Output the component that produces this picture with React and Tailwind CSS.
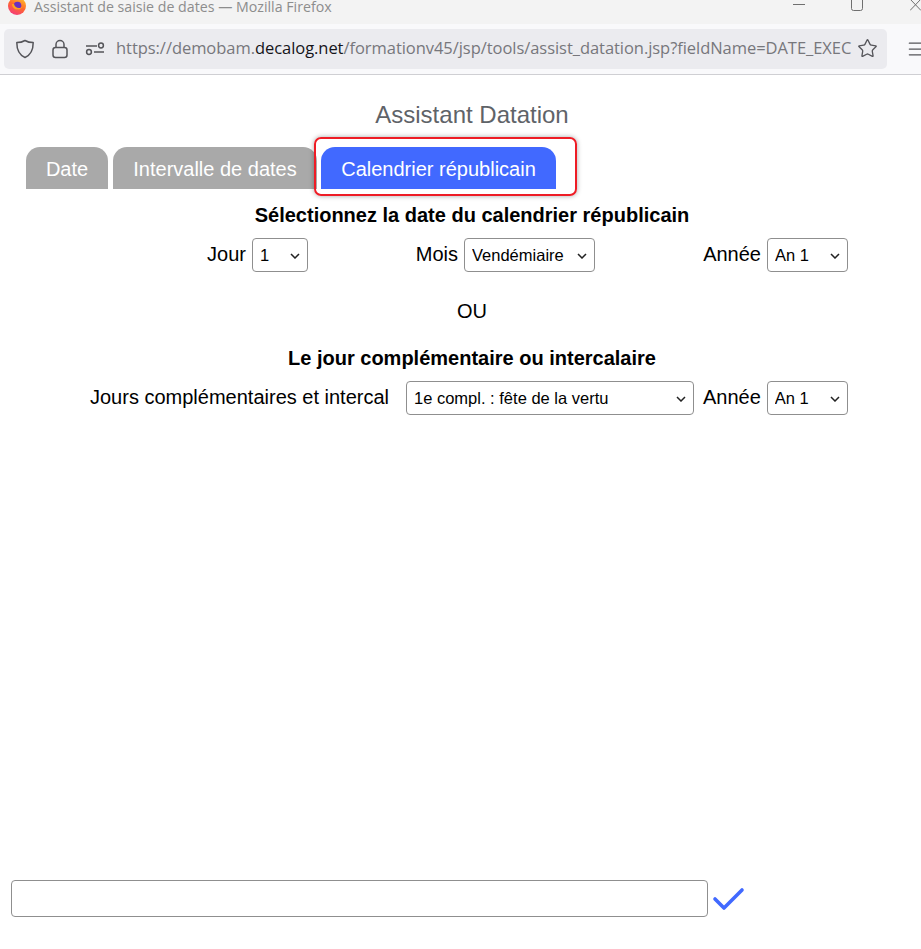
import { Star, Menu } from 'lucide-react';

function Picker({ width, options }) {
  return (
    <div className={`relative ${width} h-[34px]`}>
      <select className="appearance-none w-full h-full bg-white border border-[#8f8f8f] rounded-[4px] pl-[7px] text-[16.5px] text-black">
        {options.map((o) => (
          <option key={o}>{o}</option>
        ))}
      </select>
      <svg width="10" height="6" viewBox="0 0 10 6" fill="none" stroke="#222" strokeWidth="1.5" className="absolute right-[8px] top-[15px] pointer-events-none">
        <path d="M1 1 L5 5 L9 1" />
      </svg>
    </div>
  );
}

function Tab({ label, width, active }) {
  return (
    <div
      className={`${width} h-[42px] pt-[2px] rounded-t-[14px] flex items-center justify-center text-[20px] text-white ${
        active ? 'bg-[#4169ff]' : 'bg-[#a9a9a9]'
      }`}
    >
      {label}
    </div>
  );
}

export default function App() {
  return (
    <div className="w-[921px] h-[949px] bg-white overflow-hidden font-['Liberation_Sans',Arial,sans-serif] text-black">
      {/* window title bar */}
      <div className="h-[24px] bg-[#f3f3f3] flex items-start pl-[8px] overflow-hidden">
        <svg width="18" height="18" viewBox="0 0 18 18" className="-mt-[3px] shrink-0">
          <defs>
            <linearGradient id="fx" x1="0.8" y1="0" x2="0.3" y2="1">
              <stop offset="0" stopColor="#ffc629" />
              <stop offset="0.5" stopColor="#ff6a2b" />
              <stop offset="1" stopColor="#f43a7c" />
            </linearGradient>
          </defs>
          <circle cx="9" cy="9" r="9" fill="url(#fx)" />
          <circle cx="9.5" cy="8.5" r="3.8" fill="#6a2fc0" />
          <path d="M4 7 C4 13 12 15 15 9 C13 12 7 12 6 7 Z" fill="#ffa31f" />
        </svg>
        <span className="ml-[8px] text-[14.2px] leading-[14px] text-[#8d8d8d] font-['Open_Sans',sans-serif] whitespace-nowrap">
          Assistant de saisie de dates — Mozilla Firefox
        </span>
        <div className="ml-auto flex items-start text-[#6f6f6f] shrink-0">
          <svg width="12" height="8" viewBox="0 0 12 8" stroke="currentColor" fill="none" strokeWidth="1">
            <path d="M0 4.5 H12" />
          </svg>
          <svg width="12" height="11" viewBox="0 0 12 11" stroke="currentColor" fill="none" strokeWidth="1" className="ml-[46px]">
            <path d="M0.5 0 V8.5 a2 2 0 0 0 2 2 H9.5 a2 2 0 0 0 2 -2 V0" />
          </svg>
          <svg width="11" height="11" viewBox="0 0 11 11" stroke="currentColor" fill="none" strokeWidth="1" className="ml-[47px]">
            <path d="M0 -1 L11 10.5 M11 -1 L0 10.5" />
          </svg>
        </div>
      </div>

      {/* browser toolbar */}
      <div className="h-[51px] bg-[#f9f9fb] border-b border-[#cfcfd3] flex items-center pl-[4px] pb-[1px]">
        <div className="w-[883px] h-[40px] shrink-0 bg-[#ebebef] rounded-[5px] flex items-center pl-[11px] text-[#55555a]">
          <svg width="20" height="20" viewBox="0 0 20 20" fill="none" stroke="currentColor" strokeWidth="1.5" className="shrink-0">
            <path d="M10 1.5 C7.5 3 5 3.6 1.8 3.6 C1.8 10 3.5 15.8 10 18.5 C16.5 15.8 18.2 10 18.2 3.6 C15 3.6 12.5 3 10 1.5 Z" strokeLinejoin="round" />
          </svg>
          <svg width="18" height="20" viewBox="0 0 18 20" fill="none" stroke="currentColor" strokeWidth="1.5" className="ml-[16px] shrink-0">
            <rect x="2" y="8.5" width="14" height="10" rx="2.5" />
            <path d="M5 8.5 V5.5 a4 4 0 0 1 8 0 V8.5" />
          </svg>
          <svg width="20" height="16" viewBox="0 0 20 16" fill="none" stroke="currentColor" strokeWidth="1.5" className="ml-[16px] shrink-0">
            <path d="M1 5 H12 M9 11 H19" />
            <circle cx="16" cy="4.5" r="2.4" />
            <circle cx="4" cy="11" r="2.4" />
          </svg>
          <span className="ml-[11px] text-[16.5px] whitespace-nowrap text-[#77777c] font-['Open_Sans',sans-serif] tracking-[-0.05px]">
            https://demobam.<span className="text-[#15141a]">decalog.net</span>/formationv45/jsp/tools/assist_datation.jsp?fieldName=DATE_EXEC
          </span>
          <Star size={21} strokeWidth={1.5} className="ml-auto mr-[9px] shrink-0" />
        </div>
        <Menu size={20} strokeWidth={1.5} className="ml-[19px] shrink-0 text-[#55555a]" />
      </div>

      {/* page */}
      <h1 className="mt-[26px] w-[944px] text-center text-[24px] leading-[28px] text-[#5f6368]">
        Assistant Datation
      </h1>

      <div className="relative mt-[18px] ml-[26px] flex w-[530px] gap-[5px]">
        <Tab label="Date" width="w-[82px]" />
        <Tab label="Intervalle de dates" width="w-[204px]" />
        <div className="-ml-[1px]">
          <Tab label="Calendrier républicain" width="w-[235px]" active />
        </div>
        {/* red annotation around the active tab */}
        <div className="absolute left-[288px] top-[-10px] w-[263px] h-[59px] border-2 border-[#ee1c25] rounded-[7px] shadow-[0_0_5px_rgba(0,0,0,0.35)]" />
      </div>

      <h2 className="mt-[15px] text-center text-[20px] leading-[23px] font-bold w-[944px]">
        Sélectionnez la date du calendrier républicain
      </h2>

      <div className="mt-[11px] grid grid-cols-[308px_287px_253px] text-[20px]">
        <div className="flex items-center justify-end gap-[6px]">
          <span className="-mt-[2px]">Jour</span>
          <Picker width="w-[56px]" options={['1', '2', '3']} />
        </div>
        <div className="flex items-center justify-end gap-[6px]">
          <span className="-mt-[2px]">Mois</span>
          <Picker width="w-[131px]" options={['Vendémiaire', 'Brumaire', 'Frimaire']} />
        </div>
        <div className="flex items-center justify-end gap-[6px]">
          <span className="-mt-[2px]">Année</span>
          <Picker width="w-[81px]" options={['An 1', 'An 2', 'An 3']} />
        </div>
      </div>

      <p className="mt-[28px] text-center text-[20px] leading-[23px] w-[944px]">OU</p>

      <h2 className="pt-[24px] text-center text-[20px] leading-[23px] font-bold w-[944px]">
        Le jour complémentaire ou intercalaire
      </h2>

      <div className="mt-[11px] pl-[90px] flex items-center text-[20px]">
        <span className="-mt-[2px] w-[316px] whitespace-nowrap">Jours complémentaires et intercal</span>
        <Picker width="w-[288px]" options={['1e compl. : fête de la vertu', '2e compl. : fête du génie']} />
        <span className="-mt-[2px] ml-[9px] mr-[6px]">Année</span>
        <Picker width="w-[81px]" options={['An 1', 'An 2', 'An 3']} />
      </div>

      {/* result field */}
      <div className="mt-[465px] ml-[11px] flex items-center">
        <input className="w-[697px] h-[37px] bg-white border border-[#8f8f8f] rounded-[4px]" />
        <svg width="34" height="28" viewBox="0 0 34 28" fill="none" stroke="#4169ff" strokeWidth="3.6" strokeLinecap="round" strokeLinejoin="round" className="ml-[4px] mt-[2px]">
          <path d="M3 13 L12 22 L30 4" />
        </svg>
      </div>
    </div>
  );
}
